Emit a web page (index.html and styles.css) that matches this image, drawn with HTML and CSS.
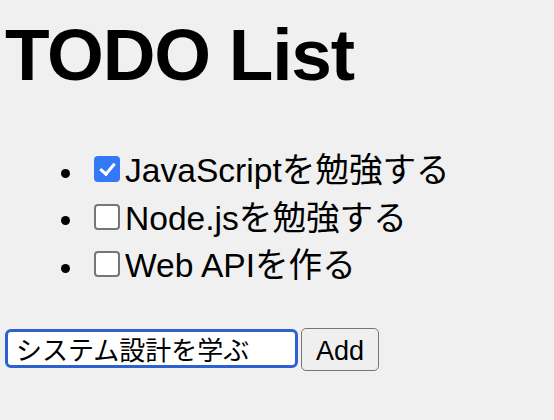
FILE: index.html
```html
<!DOCTYPE html>
<html lang="ja">
<head>
<meta charset="utf-8">
<title>TODO List</title>
<link rel="stylesheet" href="styles.css">
</head>
<body>
<h1 class="title">TODO List</h1>
<ul class="todo-list">
  <li class="todo-item"><input type="checkbox" class="check" checked><span class="label">JavaScriptを勉強する</span></li>
  <li class="todo-item"><input type="checkbox" class="check"><span class="label">Node.jsを勉強する</span></li>
  <li class="todo-item"><input type="checkbox" class="check"><span class="label">Web APIを作る</span></li>
</ul>
<form class="add-form">
  <input type="text" class="add-input" value="システム設計を学ぶ">
  <button type="button" class="add-button">Add</button>
</form>
</body>
</html>
```
FILE: styles.css
```css
html, body {
  margin: 0;
  padding: 0;
  background: #f0f0f0;
}
body {
  font-family: "Liberation Sans", "Noto Sans CJK JP", sans-serif;
  color: #000;
}
.title {
  margin: 0;
  padding: 15px 0 0 5px;
  font-size: 73px;
  line-height: 80px;
  font-weight: bold;
  letter-spacing: -1.2px;
}
.todo-list {
  list-style: none;
  margin: 52px 0 0 0;
  padding: 0 0 0 61px;
}
.todo-item {
  display: flex;
  align-items: center;
  height: 47.5px;
  font-size: 33.6px;
}
.todo-item::before {
  content: "";
  width: 9px;
  height: 9px;
  border-radius: 50%;
  background: #000;
  margin: 5px 24px 0 0;
  flex: none;
}
.label {
  line-height: 47.5px;
  white-space: nowrap;
}
.check {
  appearance: none;
  -webkit-appearance: none;
  position: relative;
  box-sizing: border-box;
  width: 26px;
  height: 26px;
  margin: 0 5px 3px 0;
  border: 2px solid #767676;
  border-radius: 4px;
  background: #fff;
  flex: none;
}
.check:checked {
  background: #3478f6;
  border-color: #3478f6;
}
.check:checked::after {
  content: "";
  position: absolute;
  left: 7px;
  top: 2px;
  width: 6px;
  height: 12px;
  border-right: 3.5px solid #fff;
  border-bottom: 3.5px solid #fff;
  transform: rotate(40deg);
}
.add-form {
  display: flex;
  align-items: flex-start;
  margin: 38px 0 0 5px;
}
.add-input {
  box-sizing: border-box;
  width: 293px;
  height: 39px;
  margin: 1.5px 3px 0 0;
  padding: 0 8px;
  border: 3px solid #2b62d0;
  border-radius: 6px;
  background: #fff;
  font-family: "Liberation Sans", "Noto Sans CJK JP", sans-serif;
  font-size: 26px;
  color: #000;
  outline: none;
}
.add-button {
  box-sizing: border-box;
  width: 78px;
  height: 43.5px;
  padding: 4px 0 0 0;
  border: 1.5px solid #767676;
  border-radius: 5px;
  background: #efefef;
  font-family: "Liberation Sans", "Noto Sans CJK JP", sans-serif;
  font-size: 27px;
  color: #000;
}
```
